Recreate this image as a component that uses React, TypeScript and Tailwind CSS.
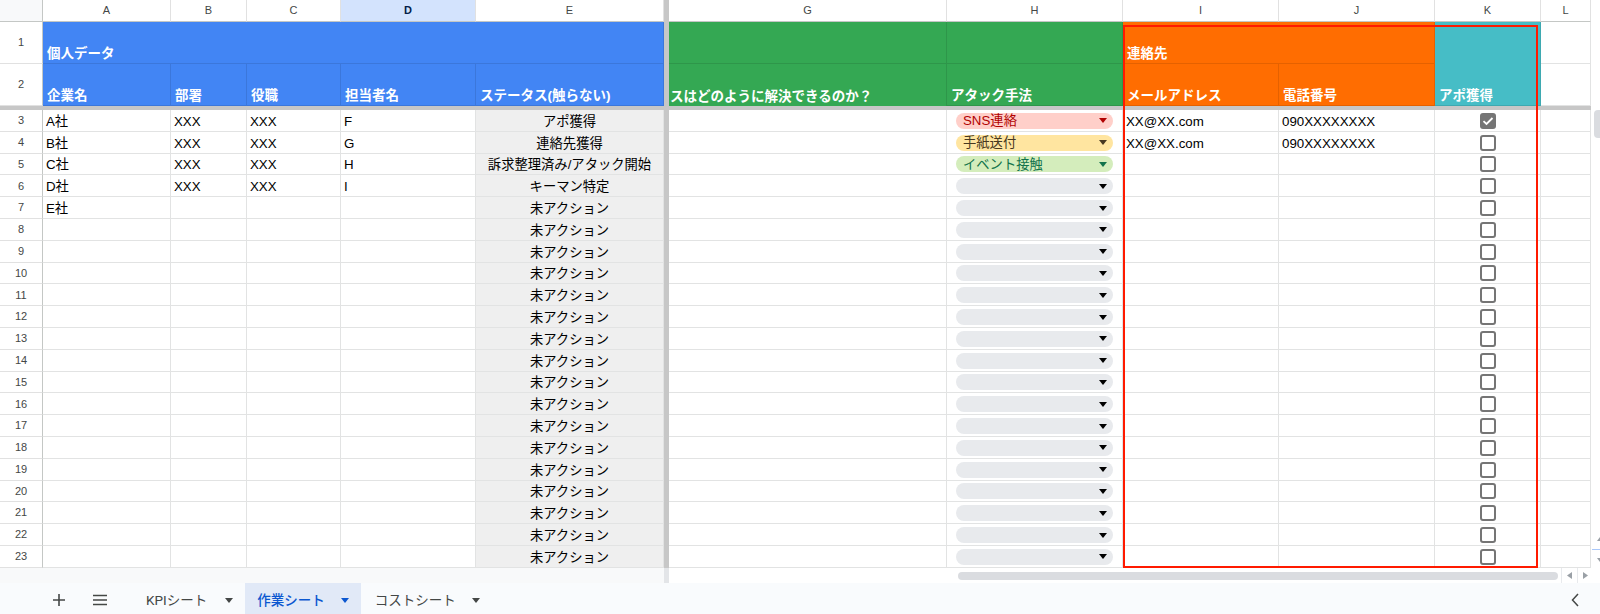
import React from 'react';

// column widths (row header, A..E, G..L)
const W = {
  rh: 'w-[43px]',
  a: 'w-[128px]',
  b: 'w-[76px]',
  c: 'w-[94px]',
  d: 'w-[135px]',
  e: 'w-[188px]',
  g: 'w-[278px]',
  h: 'w-[176px]',
  i: 'w-[156px]',
  j: 'w-[156px]',
  k: 'w-[106px]',
  l: 'w-[50px]',
};

const companies = ['A社', 'B社', 'C社', 'D社', 'E社'];
const persons = ['F', 'G', 'H', 'I'];
const statuses = ['アポ獲得', '連絡先獲得', '訴求整理済み/アタック開始', 'キーマン特定'];

type Chip = { label: string; bg: string; text: string; arrow: string };

const chips: Chip[] = [
  { label: 'SNS連絡', bg: 'bg-[#ffcfc9]', text: 'text-[#b10202]', arrow: '#b10202' },
  { label: '手紙送付', bg: 'bg-[#ffe5a0]', text: 'text-[#473821]', arrow: '#473821' },
  { label: 'イベント接触', bg: 'bg-[#d4edbc]', text: 'text-[#11734b]', arrow: '#11734b' },
];

const rows = Array.from({ length: 21 }, (_, i) => i + 3);

function Freeze() {
  return <div className="w-[5px] shrink-0 h-full bg-[#c7c7c7]" />;
}

function ColHead({ w, label, active }: { w: string; label: string; active?: boolean }) {
  return (
    <div
      className={`${w} shrink-0 h-full flex items-center justify-center border-r border-b border-r-[#e1e1e1] border-b-[#c4c7c5] text-[11px] ${
        active ? 'bg-[#d3e3fd] text-[#041e49] font-bold' : 'bg-white text-[#444746]'
      }`}
    >
      {label}
    </div>
  );
}

function RowHead({ n }: { n: number }) {
  return (
    <div className="w-[43px] shrink-0 h-full flex items-center justify-center bg-white border-r border-b border-r-[#c4c7c5] border-b-[#e1e1e1] text-[11px] text-[#444746]">
      {n}
    </div>
  );
}

function Cell({ w, className = '', children }: { w: string; className?: string; children?: React.ReactNode }) {
  return (
    <div
      className={`${w} shrink-0 h-full flex items-end pb-[2px] leading-[15px] overflow-hidden whitespace-nowrap border-r border-b border-[#e2e3e3] px-[3px] ${className}`}
    >
      {children}
    </div>
  );
}

function HeadCell({ w, bg, children, noBottom }: { w: string; bg: string; children?: React.ReactNode; noBottom?: boolean }) {
  return (
    <div
      className={`${w} ${bg} shrink-0 h-full flex items-end overflow-hidden whitespace-nowrap border-r border-black/10 pl-[4px] pb-[2px] leading-[15px] text-white font-bold text-[13.5px] ${
        noBottom ? '' : 'border-b'
      }`}
    >
      {children}
    </div>
  );
}

function Caret({ color = '#444746' }: { color?: string }) {
  return (
    <svg width="8" height="5" viewBox="0 0 8 5">
      <path d="M0 0h8L4 5z" fill={color} />
    </svg>
  );
}

function ChipBox({ chip }: { chip?: Chip }) {
  return (
    <div
      className={`ml-[9px] w-[157px] h-[16px] rounded-full flex items-center justify-between pl-[7px] pr-[6px] ${
        chip ? chip.bg : 'bg-[#e8eaed]'
      }`}
    >
      <span className={`text-[13.3px] leading-none ${chip ? chip.text : ''}`}>{chip?.label}</span>
      <Caret color={chip ? chip.arrow : '#000'} />
    </div>
  );
}

function Checkbox({ checked }: { checked?: boolean }) {
  if (checked) {
    return (
      <div className="w-[16px] h-[16px] rounded-[3px] bg-[#757575] flex items-center justify-center">
        <svg width="12" height="10" viewBox="0 0 12 10">
          <path d="M1.5 5.2 4.5 8 10.5 2" fill="none" stroke="#fff" strokeWidth="1.8" />
        </svg>
      </div>
    );
  }
  return <div className="w-[16px] h-[16px] rounded-[3px] border-2 border-[#757575] bg-white" />;
}

function DataRow({ n }: { n: number }) {
  const idx = n - 3;
  return (
    <div className="flex h-[21.8px]">
      <RowHead n={n} />
      <Cell w={W.a}>{companies[idx]}</Cell>
      <Cell w={W.b}>{idx < 4 ? 'XXX' : ''}</Cell>
      <Cell w={W.c}>{idx < 4 ? 'XXX' : ''}</Cell>
      <Cell w={W.d}>{persons[idx]}</Cell>
      <Cell w={W.e} className="bg-[#efefef] justify-center border-[#dadada]">
        {statuses[idx] ?? '未アクション'}
      </Cell>
      <Freeze />
      <Cell w={W.g} />
      <div className={`${W.h} shrink-0 h-full flex items-center pt-[1px] border-r border-b border-[#e2e3e3]`}>
        <ChipBox chip={chips[idx]} />
      </div>
      <Cell w={W.i}>{idx < 2 ? 'XX@XX.com' : ''}</Cell>
      <Cell w={W.j}>{idx < 2 ? '090XXXXXXXX' : ''}</Cell>
      <div className={`${W.k} shrink-0 h-full flex items-center justify-center pt-[1px] border-r border-b border-[#e2e3e3]`}>
        <Checkbox checked={idx === 0} />
      </div>
      <Cell w={W.l} />
    </div>
  );
}

export default function App() {
  return (
    <div className="w-[1600px] h-[614px] overflow-hidden bg-white flex flex-col text-black text-[13.3px] font-['Liberation_Sans','Noto_Sans_CJK_JP',sans-serif]">
      <div className="flex h-[568px]">
        {/* grid */}
        <div className="relative w-[1591px] shrink-0 flex flex-col">
          <div className="flex h-[22px]">
            <div className="w-[43px] shrink-0 h-full bg-[#f8f9fa] border-r border-b border-[#c4c7c5]" />
            <ColHead w={W.a} label="A" />
            <ColHead w={W.b} label="B" />
            <ColHead w={W.c} label="C" />
            <ColHead w={W.d} label="D" active />
            <ColHead w={W.e} label="E" />
            <Freeze />
            <ColHead w={W.g} label="G" />
            <ColHead w={W.h} label="H" />
            <ColHead w={W.i} label="I" />
            <ColHead w={W.j} label="J" />
            <ColHead w={W.k} label="K" />
            <ColHead w={W.l} label="L" />
          </div>

          <div className="flex h-[42px]">
            <RowHead n={1} />
            <HeadCell w="w-[621px]" bg="bg-[#4285f4]">
              個人データ
            </HeadCell>
            <Freeze />
            <HeadCell w={W.g} bg="bg-[#34a853]" />
            <HeadCell w={W.h} bg="bg-[#34a853]" />
            <HeadCell w="w-[312px]" bg="bg-[#ff6d01]">
              連絡先
            </HeadCell>
            <HeadCell w={W.k} bg="bg-[#46bdc6]" noBottom />
            <Cell w={W.l} />
          </div>

          <div className="flex h-[42px]">
            <RowHead n={2} />
            <HeadCell w={W.a} bg="bg-[#4285f4]">企業名</HeadCell>
            <HeadCell w={W.b} bg="bg-[#4285f4]">部署</HeadCell>
            <HeadCell w={W.c} bg="bg-[#4285f4]">役職</HeadCell>
            <HeadCell w={W.d} bg="bg-[#4285f4]">担当者名</HeadCell>
            <HeadCell w={W.e} bg="bg-[#4285f4]">ステータス(触らない)</HeadCell>
            <Freeze />
            <div className={`${W.g} shrink-0 h-full bg-[#34a853] border-r border-black/10 flex items-end pb-[2px] pl-[1px] leading-[15px] overflow-hidden whitespace-nowrap text-white font-bold text-[13.5px]`}>
              スはどのように解決できるのか？
            </div>
            <HeadCell w={W.h} bg="bg-[#34a853]">アタック手法</HeadCell>
            <HeadCell w={W.i} bg="bg-[#ff6d01]">メールアドレス</HeadCell>
            <HeadCell w={W.j} bg="bg-[#ff6d01]">電話番号</HeadCell>
            <HeadCell w={W.k} bg="bg-[#46bdc6]">アポ獲得</HeadCell>
            <Cell w={W.l} />
          </div>

          <div className="h-[4px] bg-[#c7c7c7]" />

          {rows.map(n => (
            <DataRow key={n} n={n} />
          ))}

          {/* highlight around contact columns */}
          <div className="absolute left-[1123px] top-[25px] w-[415px] h-[543px] border-2 border-[#ff1a00] pointer-events-none" />
        </div>

        {/* vertical scrollbar (cut off) */}
        <div className="w-[9px] shrink-0 flex flex-col bg-white">
          <div className="h-[110px]" />
          <div className="ml-[3px] h-[28px] bg-[#dadce0] rounded-l-[4px]" />
          <div className="flex-1" />
          <div className="flex flex-col items-end pb-[4px]">
            <svg width="6" height="8" viewBox="0 0 6 8" className="mb-[6px]">
              <path d="M6 2 3 6h3z" fill="#9aa0a6" />
            </svg>
            <div className="w-[8px] h-[1px] bg-[#a8c7fa]" />
            <svg width="6" height="8" viewBox="0 0 6 8" className="mt-[6px]">
              <path d="M3 2h3v4z" fill="#9aa0a6" />
            </svg>
          </div>
        </div>
      </div>

      {/* horizontal scrollbar */}
      <div className="flex h-[15px]">
        <div className="w-[664px] shrink-0 h-full bg-[#f8f9fa]" />
        <div className="w-[5px] shrink-0 h-full bg-[#e3e5e8]" />
        <div className="flex-1 h-full flex items-center bg-white">
          <div className="ml-[289px] w-[600px] h-[8px] rounded-full bg-[#dadce0]" />
          <div className="ml-[3px] w-[16px] h-full flex items-center justify-center border-l border-[#e8eaed]">
            <svg width="5" height="7" viewBox="0 0 5 7">
              <path d="M5 0v7L0 3.5z" fill="#9aa0a6" />
            </svg>
          </div>
          <div className="w-[16px] h-full flex items-center justify-center border-l border-[#e8eaed]">
            <svg width="5" height="7" viewBox="0 0 5 7">
              <path d="M0 0v7l5-3.5z" fill="#9aa0a6" />
            </svg>
          </div>
        </div>
      </div>

      {/* sheet tabs */}
      <div className="h-[31px] flex items-stretch bg-[#f9fbfd] text-[13.5px] text-[#444746] font-['Roboto','Noto_Sans_CJK_JP',sans-serif]">
        <div className="ml-[52px] flex items-center pt-[3px]">
          <svg width="14" height="14" viewBox="0 0 14 14">
            <path d="M7 1v12M1 7h12" stroke="#444746" strokeWidth="1.6" />
          </svg>
        </div>
        <div className="ml-[26px] flex items-center pt-[3px]">
          <svg width="16" height="12" viewBox="0 0 16 12">
            <path d="M1 1.5h14M1 6h14M1 10.5h14" stroke="#444746" strokeWidth="1.5" />
          </svg>
        </div>
        <div className="ml-[38px] flex items-center gap-[18px] pt-[3px]">
          <span>KPIシート</span>
          <Caret />
        </div>
        <div className="ml-[12px] flex items-center gap-[16px] pl-[12px] pr-[12px] pt-[3px] bg-[#e1e9f7] text-[#0b57d0] font-medium">
          <span>作業シート</span>
          <Caret color="#0b57d0" />
        </div>
        <div className="ml-[14px] flex items-center gap-[16px] pt-[3px]">
          <span>コストシート</span>
          <Caret />
        </div>
        <div className="ml-auto mr-[21px] flex items-center pt-[3px]">
          <svg width="8" height="14" viewBox="0 0 8 14">
            <path d="M7 1 1.5 7 7 13" fill="none" stroke="#444746" strokeWidth="1.5" />
          </svg>
        </div>
      </div>
    </div>
  );
}
